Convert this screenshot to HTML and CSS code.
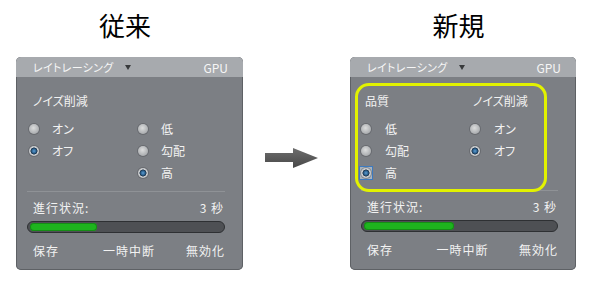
FILE: index.html
```html
<!DOCTYPE html>
<html lang="ja">
<head>
<meta charset="utf-8">
<title>レイトレーシング 比較</title>
<link rel="stylesheet" href="styles.css">
</head>
<body>
<div class="page">
  <section class="column old">
    <h1 class="title">従来</h1>
    <div class="panel">
      <div class="panel-head">
        <span>レイトレーシング</span>
        <span class="caret"></span>
        <span class="gpu">GPU</span>
      </div>
      <div class="panel-body">
        <div class="heading">ノイズ削減</div>
        <div class="options">
          <div class="option"><span class="radio"></span>オン</div>
          <div class="option"><span class="radio"></span>低</div>
          <div class="option"><span class="radio on"></span>オフ</div>
          <div class="option"><span class="radio"></span>勾配</div>
          <div></div>
          <div class="option"><span class="radio on"></span>高</div>
        </div>
        <div class="divider"></div>
        <div class="status"><span>進行状況:</span><span>3 秒</span></div>
        <div class="bar"><div class="fill" style="width: 35%"></div></div>
        <div class="actions"><span>保存</span><span>一時中断</span><span>無効化</span></div>
      </div>
    </div>
  </section>

  <div class="arrow">
    <svg width="54" height="24" viewBox="0 0 54 24">
      <defs>
        <linearGradient id="arrowFill" x1="0" y1="0" x2="0" y2="1">
          <stop offset="0" stop-color="#6e6e6e"/>
          <stop offset="1" stop-color="#474747"/>
        </linearGradient>
      </defs>
      <path d="M1 7 H29 V2 L54 12 L29 22 V16 H1 Z" fill="url(#arrowFill)"/>
    </svg>
  </div>

  <section class="column new">
    <h1 class="title">新規</h1>
    <div class="panel">
      <div class="panel-head">
        <span>レイトレーシング</span>
        <span class="caret"></span>
        <span class="gpu">GPU</span>
      </div>
      <div class="panel-body">
        <div class="group">
          <div class="group-heads"><span>品質</span><span>ノイズ削減</span></div>
          <div class="options">
            <div class="option"><span class="radio"></span>低</div>
            <div class="option"><span class="radio"></span>オン</div>
            <div class="option"><span class="radio"></span>勾配</div>
            <div class="option"><span class="radio on"></span>オフ</div>
            <div class="option"><span class="focus"><span class="radio on"></span></span>高</div>
          </div>
        </div>
        <div class="divider"></div>
        <div class="status"><span>進行状況:</span><span>3 秒</span></div>
        <div class="bar"><div class="fill" style="width: 47%"></div></div>
        <div class="actions"><span>保存</span><span>一時中断</span><span>無効化</span></div>
      </div>
    </div>
  </section>
</div>
</body>
</html>
```

FILE: styles.css
```css
body {
  margin: 0;
  background: #fff;
  font-family: "Noto Sans CJK JP", sans-serif;
}

.page {
  display: flex;
  padding-left: 16px;
}

.column {
  display: flex;
  flex-direction: column;
}
.old {
  width: 227px;
}
.new {
  width: 226px;
}

.title {
  margin: 0;
  height: 57px;
  padding: 11px 9px 0 0;
  box-sizing: border-box;
  font-size: 26px;
  line-height: 28px;
  font-weight: 400;
  text-align: center;
  color: #000;
}

.arrow {
  width: 107px;
}
.arrow svg {
  display: block;
  margin: 146px 0 0 21px;
}

.panel {
  height: 213px;
  border-radius: 5px;
  background: #7c7f84;
  overflow: hidden;
  box-shadow: inset 0 0 0 1px #5e6165;
}

.panel-head {
  height: 20px;
  display: flex;
  align-items: center;
  padding: 0 15px 0 17px;
  background: #a7aaae;
  color: #f6f6f6;
  font-size: 11px;
  letter-spacing: 0.3px;
  font-feature-settings: "palt";
}
.caret {
  width: 0;
  height: 0;
  border-left: 3px solid transparent;
  border-right: 3px solid transparent;
  border-top: 5px solid #383a3c;
  margin-left: 12px;
}
.gpu {
  margin-left: auto;
  font-size: 12px;
  letter-spacing: 0;
}

.panel-body {
  padding: 0 18px 0 11px;
  color: #f2f2f2;
  font-size: 12px;
  line-height: 16px;
}

.heading {
  height: 16px;
  margin-top: 16px;
  padding-left: 6px;
  font-feature-settings: "palt";
}

.options {
  display: grid;
  grid-template-columns: 109px 1fr;
  grid-auto-rows: 22px;
  margin-top: 9px;
  padding-left: 2px;
}
.option {
  display: flex;
  align-items: center;
  gap: 13px;
  font-feature-settings: "palt";
}

.radio {
  flex: none;
  width: 10px;
  height: 10px;
  border-radius: 50%;
  background: radial-gradient(circle at 45% 40%, #dcdddd 0, #bcbec0 45%, #979a9d 100%);
  box-shadow: 0 0 0 1px rgba(80, 83, 87, 0.45);
}
.radio.on {
  background: radial-gradient(circle, #5d9dd2 0, #2a5f8c 2.2px, #1b2f44 3.2px, #cdcfd1 3.8px, #abaeb1 100%);
}
.focus {
  display: flex;
  margin: -2px;
  padding: 1px;
  border: 1px solid #3d7abf;
  background: #a9b3bd;
}

.divider {
  height: 1px;
  margin-top: 7px;
  background: #8f9296;
}

.status {
  display: flex;
  justify-content: space-between;
  height: 16px;
  margin-top: 8px;
  padding: 0 1px 0 6px;
  letter-spacing: 1px;
}

.bar {
  height: 12px;
  margin-top: 5px;
  box-sizing: border-box;
  padding: 1px 2px;
  border: 1px solid #2e3033;
  border-radius: 6px;
  background: #4e5054;
}
.fill {
  height: 100%;
  border-radius: 4px;
  background: #1eb41e;
  box-shadow: inset 0 0 0 1px #168c16;
}

.actions {
  display: grid;
  grid-template-columns: 1fr auto 1fr;
  height: 16px;
  margin-top: 10px;
  padding-left: 6px;
  letter-spacing: 1px;
}
.actions span:last-child {
  text-align: right;
}

/* 新規パネル：黄色の枠 */
.group {
  position: relative;
  z-index: 1;
  width: 192px;
  box-sizing: border-box;
  margin: 6px 0 0 -6px;
  padding: 7px 0 5px 3px;
  border: 3px solid #e2f200;
  border-radius: 14px;
}
.group-heads {
  display: grid;
  grid-template-columns: 109px 1fr;
  height: 16px;
  padding-left: 4px;
  font-feature-settings: "palt";
}
.group-heads span:last-child {
  margin-left: -1px;
}
.group .options {
  padding-left: 0;
}
.group .option {
  gap: 14px;
}
.new .divider {
  margin: -2px 0 2px;
}
```
